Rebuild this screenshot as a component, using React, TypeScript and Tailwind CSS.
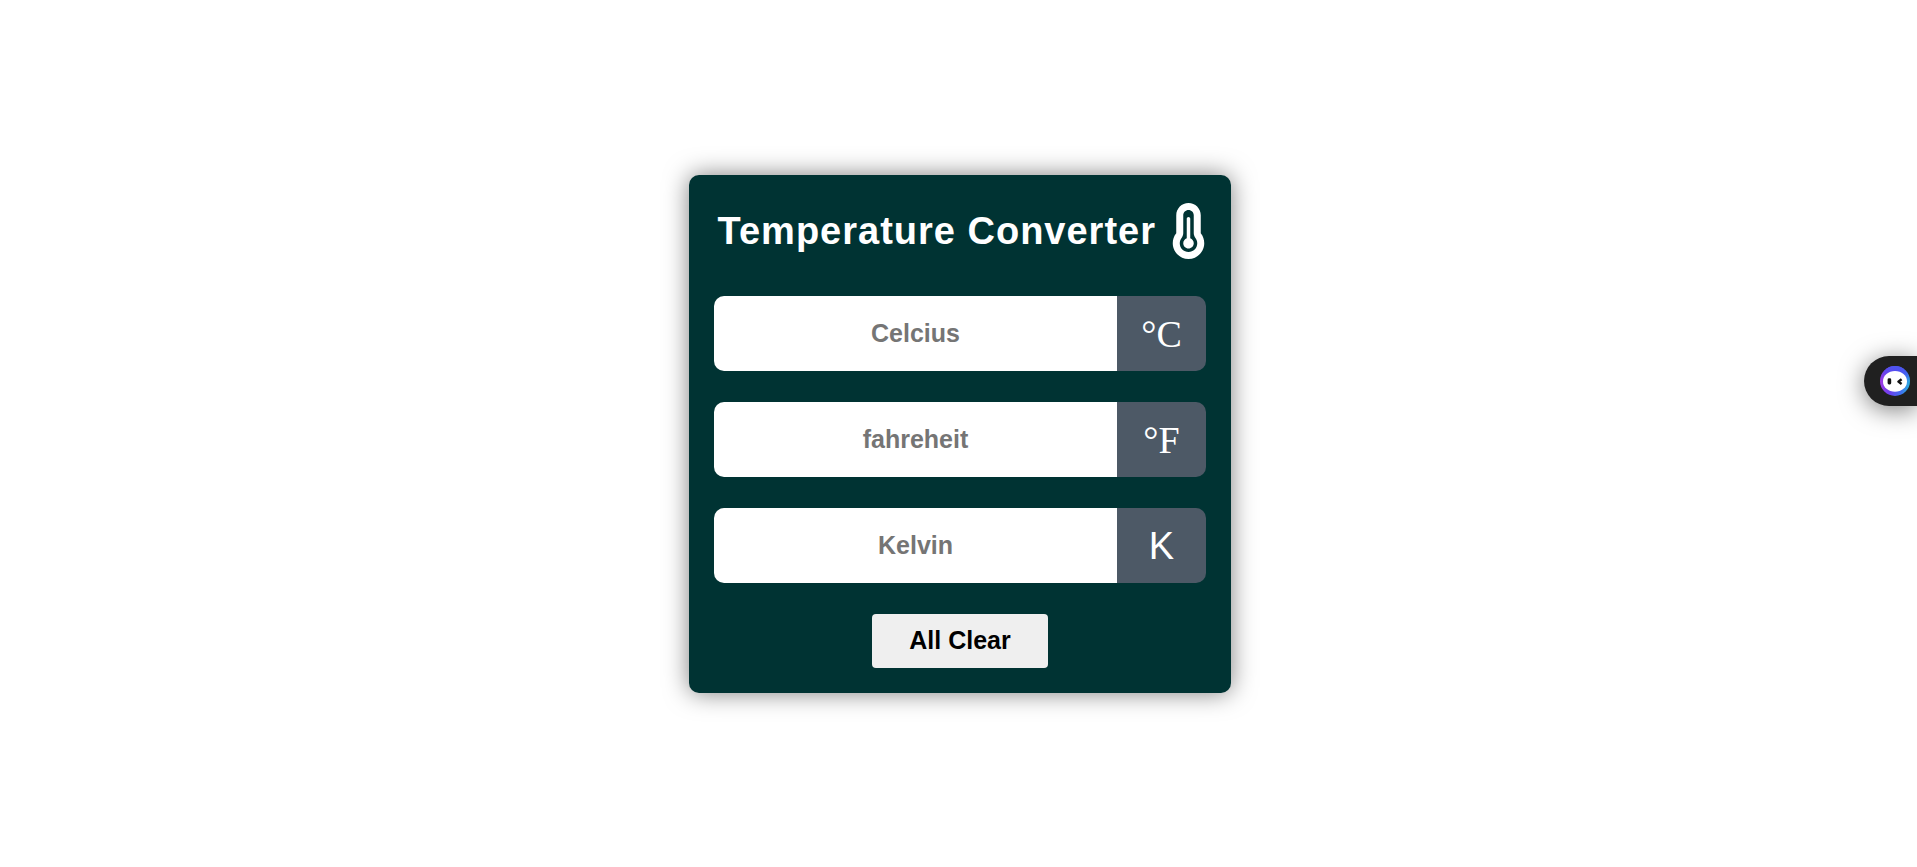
import { useState } from "react";
import { FaTemperatureThreeQuarters } from "react-icons/fa6";

type Unit = "celsius" | "fahrenheit" | "kelvin";
type Values = Record<Unit, string>;

const EMPTY: Values = { celsius: "", fahrenheit: "", kelvin: "" };

const FIELDS: { unit: Unit; placeholder: string; symbol: string; symbolClass: string }[] = [
  { unit: "celsius", placeholder: "Celcius", symbol: "°C", symbolClass: "font-['Liberation_Serif',serif]" },
  { unit: "fahrenheit", placeholder: "fahreheit", symbol: "°F", symbolClass: "font-['Liberation_Serif',serif]" },
  { unit: "kelvin", placeholder: "Kelvin", symbol: "K", symbolClass: "" },
];

function convert(unit: Unit, raw: string): Values {
  const n = parseFloat(raw);
  if (Number.isNaN(n)) return { ...EMPTY, [unit]: raw };
  const c = unit === "celsius" ? n : unit === "fahrenheit" ? ((n - 32) * 5) / 9 : n - 273.15;
  const all: Values = {
    celsius: c.toFixed(2),
    fahrenheit: ((c * 9) / 5 + 32).toFixed(2),
    kelvin: (c + 273.15).toFixed(2),
  };
  return { ...all, [unit]: raw };
}

function AssistantTab() {
  return (
    <button
      type="button"
      aria-label="Open assistant"
      className="fixed top-[356px] right-0 flex h-[50px] items-center rounded-l-full bg-[#202020] pr-[7px] pl-4 shadow-[0_4px_24px_rgba(0,0,0,0.5)]"
    >
      <svg width="30" height="30" viewBox="0 0 30 30" aria-hidden="true">
        <defs>
          <linearGradient id="ring" x1="0" y1="0.5" x2="1" y2="0.7">
            <stop offset="0" stopColor="#a03ae2" />
            <stop offset="0.4" stopColor="#6a40f0" />
            <stop offset="0.75" stopColor="#3f70f0" />
            <stop offset="1" stopColor="#27b8dc" />
          </linearGradient>
          <linearGradient id="top" x1="0" y1="0" x2="0" y2="1">
            <stop offset="0" stopColor="#4a58f0" />
            <stop offset="0.5" stopColor="#4a40f4" stopOpacity="0" />
          </linearGradient>
        </defs>
        <circle cx="15" cy="15" r="15" fill="url(#ring)" />
        <circle cx="15" cy="15" r="15" fill="url(#top)" />
        <ellipse cx="15" cy="15.4" rx="12" ry="10.4" fill="#fff" />
        <rect x="7.6" y="12.3" width="3.6" height="6.2" rx="1.4" fill="#111" />
        <path d="M21.6 13.2 18.4 15.6 21.6 18" fill="none" stroke="#111" strokeWidth="2.4" strokeLinejoin="round" />
      </svg>
    </button>
  );
}

export default function App() {
  const [values, setValues] = useState<Values>(EMPTY);

  return (
    <div className="flex min-h-screen items-center justify-center bg-white pt-px pl-[3px] font-['Liberation_Sans',Arial,sans-serif]">
      <main className="flex w-full max-w-[542px] flex-col gap-[31px] rounded-[10px] bg-[#003333] p-[25px] shadow-[0_0_25px_rgba(0,0,0,0.5)]">
        <header className="flex items-center justify-end gap-[15px] pt-[3px] pb-[6px]">
          <h1 className="text-[38px] leading-none font-bold tracking-[1px] text-white">Temperature Converter</h1>
          <FaTemperatureThreeQuarters className="h-14 w-[35px] text-white" aria-hidden="true" />
        </header>
        {FIELDS.map((f) => (
          <div key={f.unit} className="flex h-[75px] overflow-hidden rounded-[10px]">
            <input
              id={f.unit}
              type="text"
              inputMode="decimal"
              placeholder={f.placeholder}
              value={values[f.unit]}
              onChange={(e) => setValues(convert(f.unit, e.target.value))}
              className="min-w-0 flex-1 bg-white text-center text-[25px] font-bold text-black outline-none placeholder:text-[#757575]"
            />
            <label
              htmlFor={f.unit}
              className="flex w-[89px] items-center justify-center bg-[#4d5966] text-[38px] leading-none text-white"
            >
              <span className={f.symbolClass}>{f.symbol}</span>
            </label>
          </div>
        ))}
        <button
          type="button"
          onClick={() => setValues(EMPTY)}
          className="h-[54px] w-44 self-center rounded-[4px] bg-[#efefef] text-[25px] font-bold text-black"
        >
          All Clear
        </button>
      </main>
      <AssistantTab />
    </div>
  );
}
